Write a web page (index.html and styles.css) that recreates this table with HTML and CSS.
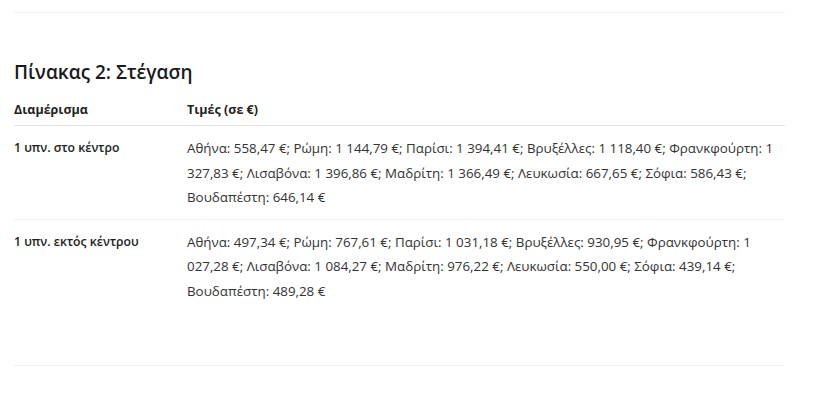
FILE: index.html
```html
<!DOCTYPE html>
<html lang="el">
<head>
<meta charset="utf-8">
<link rel="stylesheet" href="styles.css">
</head>
<body>
<div class="page">
  <hr class="rule rule-top">
  <h2 class="title">Πίνακας 2: Στέγαση</h2>
  <table class="tbl">
    <thead>
      <tr>
        <th class="c1">Διαμέρισμα</th>
        <th class="c2">Τιμές (σε €)</th>
      </tr>
    </thead>
    <tbody>
      <tr>
        <td class="c1 name">1 υπν. στο κέντρο</td>
        <td class="c2">Αθήνα: 558,47 €; Ρώμη: 1 144,79 €; Παρίσι: 1 394,41 €; Βρυξέλλες: 1 118,40 €; Φρανκφούρτη: 1 327,83 €; Λισαβόνα: 1 396,86 €; Μαδρίτη: 1 366,49 €; Λευκωσία: 667,65 €; Σόφια: 586,43 €; Βουδαπέστη: 646,14 €</td>
      </tr>
      <tr>
        <td class="c1 name">1 υπν. εκτός κέντρου</td>
        <td class="c2">Αθήνα: 497,34 €; Ρώμη: 767,61 €; Παρίσι: 1 031,18 €; Βρυξέλλες: 930,95 €; Φρανκφούρτη: 1 027,28 €; Λισαβόνα: 1 084,27 €; Μαδρίτη: 976,22 €; Λευκωσία: 550,00 €; Σόφια: 439,14 €; Βουδαπέστη: 489,28 €</td>
      </tr>
    </tbody>
  </table>
  <hr class="rule rule-bottom">
</div>
</body>
</html>
```

FILE: styles.css
```css
html, body {
  margin: 0;
  padding: 0;
  background: #ffffff;
}
body {
  font-family: "Open Sans", "Noto Sans", sans-serif;
  color: #2b2b2b;
}
.page {
  width: 771px;
  margin-left: 14px;
  padding-top: 12px;
}
.rule {
  border: 0;
  margin: 0;
  height: 1px;
}
.rule-top {
  background: #efefef;
}
.rule-bottom {
  background: #f1f1f1;
  margin-top: 53px;
}
.title {
  font-size: 19px;
  font-weight: 600;
  color: #1a1a1a;
  margin: 47px 0 0 0;
  line-height: 24px;
}
.tbl {
  width: 100%;
  border-collapse: collapse;
  margin: 0;
}
.tbl th {
  text-align: left;
  font-size: 12.5px;
  font-weight: 700;
  color: #222;
  padding: 17px 0 6px 0;
  line-height: 18px;
  border-bottom: 1px solid #e3e3e3;
}
.tbl td {
  font-size: 13.35px;
  line-height: 24.5px;
  padding: 10px 0 9px 0;
  vertical-align: top;
  color: #333;
}
.tbl tbody tr + tr td {
  border-top: 1px solid #f0f0f0;
}
.tbl td.name {
  font-size: 12.2px;
  font-weight: 600;
  color: #222;
}
.c1 {
  width: 173px;
}
.tbl .c2 {
  padding-right: 0;
}
```
